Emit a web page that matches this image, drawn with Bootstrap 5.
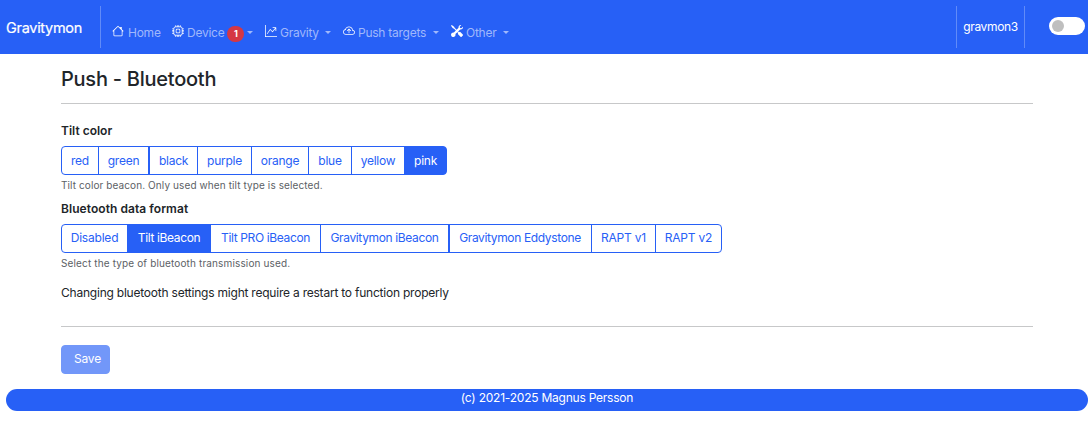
<!DOCTYPE html>
<html lang="en">
<head>
<meta charset="utf-8">
<meta name="viewport" content="width=device-width, initial-scale=1">
<title>Gravitymon</title>
<link href="https://cdn.jsdelivr.net/npm/bootstrap@5.3.0/dist/css/bootstrap.min.css" rel="stylesheet">
<script src="https://cdn.jsdelivr.net/npm/bootstrap@5.3.0/dist/js/bootstrap.bundle.min.js" defer></script>
<style>
:root { --gm-blue: #2760f6; }
body { font-family: Inter, "Liberation Sans", sans-serif; font-size: 12px; line-height: 18px; color: #212529; letter-spacing: -.1px; overflow: hidden; }
.gm-nav { height: 54px; background: var(--gm-blue); padding: 0; }
.gm-nav .navbar-brand { font-size: 14.5px; letter-spacing: -.3px; width: 94px; margin: 2px 0 0 6px; padding: 0; line-height: 22px; -webkit-text-stroke: .2px #fff; }
.gm-rule { width: 1px; height: 42px; background: rgba(255,255,255,.27); }
.gm-menu { padding-top: 11px; }
.gm-nav .gm-menu .nav-link { padding: 0; height: 20px; color: #a0b8fb; display: flex; align-items: center; white-space: nowrap; letter-spacing: -.25px; }
.gm-menu svg { flex: none; width: 12px; height: 12px; margin-right: 3px; margin-bottom: 3px; fill: #fff; }
.gm-menu .dropdown-toggle::after { margin-left: auto; border-width: 3px; border-bottom: 0; vertical-align: 0; }
.gm-nav .gm-count { flex: none; width: 17px; height: 16px; padding: 0; line-height: 16px; font-size: 9px; margin-left: 3px; border-radius: 8px; background: #d53744; position: relative; top: 1px; }
.m-home { width: 60px; margin-left: 11px; }
.m-device { width: 81px; }
.m-gravity { width: 66px; margin-left: 12px; }
.m-push { width: 96px; margin-left: 12px; }
.m-other { width: 58px; margin-left: 12px; }
.gm-host { width: 67px; letter-spacing: -.35px; }
.gm-switch { width: 36px; height: 18px; border-radius: 9px; background: #fff; padding: 3px; margin: 0 3px 2px 24px; }
.gm-switch span { display: block; width: 12px; height: 12px; border-radius: 50%; background: #bfbfbf; }
.gm-page { width: 972px; margin-left: 61px; padding: 12px 0 0; }
.gm-page h1 { font-size: 20px; line-height: 26px; letter-spacing: -.25px; margin: 0 0 11px; }
.gm-page hr { margin: 0; border-color: #212529; opacity: .25; }
.gm-label { display: block; font-weight: 600; line-height: 18px; letter-spacing: .06px; margin: 8px 0 6px; }
hr + .gm-label { margin-top: 18px; letter-spacing: 0; }
.gm-page .btn { --bs-btn-color: var(--gm-blue); --bs-btn-border-color: var(--gm-blue); --bs-btn-active-bg: var(--gm-blue); --bs-btn-active-border-color: var(--gm-blue); --bs-btn-padding-x: 0; --bs-btn-padding-y: 0; --bs-btn-font-size: 12px; --bs-btn-border-radius: 4px; height: 29px; line-height: 27px; flex: none; white-space: nowrap; letter-spacing: -.25px; }
.gm-page .gm-formats .btn { letter-spacing: -.36px; padding-bottom: 2px; line-height: 25px; }
.gm-page .gm-formats .w-r1, .gm-page .gm-formats .w-r2, .gm-page .gm-formats .w-off { letter-spacing: -.2px; }
.gm-page .btn-group > .gm-apart { margin-left: 0 !important; }
.gm-page .gm-formats .w-eddy { padding-right: 1px; }
.gm-help { font-size: 10px; line-height: 14px; margin-top: 3px; color: #5c6165; letter-spacing: .1px; }
.gm-formats + .gm-help { letter-spacing: .14px; }
.gm-note { margin: 14px 0 24px; letter-spacing: -.22px; }
.gm-page .gm-save { --bs-btn-disabled-bg: var(--gm-blue); --bs-btn-disabled-border-color: var(--gm-blue); width: 49px; padding: 0 0 2px 4px; line-height: 25px; margin-top: 18px; }
.gm-foot { height: 22px; margin: 15px 0 0 6px; border-radius: 11px; background: var(--gm-blue); line-height: 18px; letter-spacing: -.23px; }
.w-red{width:38px}.w-green{width:51px}.w-black{width:49px}.w-purple{width:55px}.w-orange{width:58px}.w-blue{width:44px}.w-yellow{width:54px}.w-pink{width:43px}
.w-off{width:67px}.w-tilt{width:84px}.w-pro{width:111px}.w-gib{width:129px}.w-eddy{width:143px}.w-r1{width:65px}.w-r2{width:67px}
</style>
</head>
<body>
<nav class="navbar navbar-expand gm-nav" data-bs-theme="dark">
  <div class="d-flex align-items-center w-100 h-100">
    <a class="navbar-brand text-white" href="#">Gravitymon</a>
    <div class="gm-rule"></div>
    <ul class="navbar-nav gm-menu">
      <li class="nav-item m-home"><a class="nav-link" href="#"><svg class="me-1" viewBox="0 0 16 16"><path d="M8.700 1.500a1 1 0 0 0-1.400 0L.6 8.100l.8.8.6-.6v5.200A1.500 1.500 0 0 0 3.500 15h9a1.500 1.500 0 0 0 1.500-1.500V8.300l.6.6.8-.8L13 5.800V2.500h-2v1.300zM3 7.300l5-5 5 5v6.200a.5.5 0 0 1-.5.5h-9a.5.5 0 0 1-.5-.5z"/></svg><span>Home</span></a></li>
      <li class="nav-item m-device"><a class="nav-link dropdown-toggle" href="#"><svg viewBox="0 0 16 16"><path d="M5 0a.5.5 0 0 1 .5.5V2h1V.5a.5.5 0 0 1 1 0V2h1V.5a.5.5 0 0 1 1 0V2h1V.5a.5.5 0 0 1 1 0V2A2.500 2.500 0 0 1 14 4.500h1.500a.5.5 0 0 1 0 1H14v1h1.500a.5.5 0 0 1 0 1H14v1h1.500a.5.5 0 0 1 0 1H14v1h1.500a.5.5 0 0 1 0 1H14a2.500 2.500 0 0 1-2.500 2.500v1.500a.5.5 0 0 1-1 0V14h-1v1.500a.5.5 0 0 1-1 0V14h-1v1.500a.5.5 0 0 1-1 0V14h-1v1.500a.5.5 0 0 1-1 0V14A2.500 2.500 0 0 1 2 11.500H.5a.5.5 0 0 1 0-1H2v-1H.5a.5.5 0 0 1 0-1H2v-1H.5a.5.5 0 0 1 0-1H2v-1H.5a.5.5 0 0 1 0-1H2A2.500 2.500 0 0 1 4.500 2V.5A.5.5 0 0 1 5 0m-.5 3A1.500 1.500 0 0 0 3 4.500v7A1.500 1.500 0 0 0 4.500 13h7a1.500 1.500 0 0 0 1.500-1.500v-7A1.500 1.500 0 0 0 11.500 3zM5 6.500A1.500 1.500 0 0 1 6.500 5h3A1.500 1.500 0 0 1 11 6.500v3A1.500 1.500 0 0 1 9.500 11h-3A1.500 1.500 0 0 1 5 9.500zM6.500 6a.5.5 0 0 0-.5.5v3a.5.5 0 0 0 .5.5h3a.5.5 0 0 0 .5-.5v-3a.5.5 0 0 0-.5-.5z"/></svg><span>Device</span><span class="badge gm-count">1</span></a></li>
      <li class="nav-item m-gravity"><a class="nav-link dropdown-toggle" href="#"><svg viewBox="0 0 16 16"><path fill-rule="evenodd" d="M0 0h1v15h15v1H0zm10 3.500a.5.5 0 0 1 .5-.5h4a.5.5 0 0 1 .5.5v4a.5.5 0 0 1-1 0V4.900l-3.613 4.417a.5.5 0 0 1-.74.037L7.060 6.767l-3.656 5.027a.5.5 0 0 1-.808-.588l4-5.500a.5.5 0 0 1 .758-.06l2.609 2.610L13.445 4H10.500a.5.5 0 0 1-.5-.5"/></svg><span>Gravity</span></a></li>
      <li class="nav-item m-push"><a class="nav-link dropdown-toggle" href="#"><svg viewBox="0 0 16 16"><path d="M7.646 5.146a.5.5 0 0 1 .708 0l2 2a.5.5 0 0 1-.708.708L8.500 6.707V10.500a.5.5 0 0 1-1 0V6.707L6.354 7.854a.5.5 0 1 1-.708-.708z"/><path d="M4.406 3.342A5.530 5.530 0 0 1 8 2c2.690 0 4.923 2 5.166 4.579C14.758 6.804 16 8.137 16 9.773 16 11.569 14.502 13 12.687 13H3.781C1.708 13 0 11.366 0 9.318c0-1.763 1.266-3.223 2.942-3.593.143-.863.698-1.723 1.464-2.383m.653.757c-.757.653-1.153 1.440-1.153 2.056v.448l-.445.049C2.064 6.805 1 7.952 1 9.318 1 10.785 2.230 12 3.781 12h8.906C13.980 12 15 10.988 15 9.773c0-1.216-1.020-2.228-2.313-2.228h-.5v-.5C12.188 4.825 10.328 3 8 3a4.530 4.530 0 0 0-2.941 1.100z"/></svg><span>Push targets</span></a></li>
      <li class="nav-item m-other"><a class="nav-link dropdown-toggle" href="#"><svg viewBox="0 0 16 16"><path d="M1 0 0 1l2.200 3.081a1 1 0 0 0 .815.419h.07a1 1 0 0 1 .708.293l2.675 2.675-2.617 2.654A3.003 3.003 0 0 0 0 13a3 3 0 1 0 5.878-.851l2.654-2.617.968.968-.305.914a1 1 0 0 0 .242 1.023l3.270 3.270a.997.997 0 0 0 1.414 0l1.586-1.586a.997.997 0 0 0 0-1.414l-3.270-3.270a1 1 0 0 0-1.023-.242L10.500 9.500l-.96-.96 2.680-2.643A3.005 3.005 0 0 0 16 3q0-.405-.102-.777l-2.140 2.141L12 4l-.364-1.757L13.777.102a3 3 0 0 0-3.675 3.680L7.462 6.460 4.793 3.793a1 1 0 0 1-.293-.707v-.071a1 1 0 0 0-.419-.814z"/></svg><span>Other</span></a></li>
    </ul>
    <div class="gm-rule ms-auto"></div>
    <div class="gm-host text-white text-center">gravmon3</div>
    <div class="gm-rule"></div>
    <div class="gm-switch"><span></span></div>
  </div>
</nav>
<main class="gm-page">
  <h1>Push - Bluetooth</h1>
  <hr>
  <label class="gm-label">Tilt color</label>
  <div class="btn-group d-flex">
    <button class="btn btn-outline-primary w-red">red</button><button class="btn btn-outline-primary w-green">green</button><button class="btn btn-outline-primary w-black gm-apart">black</button><button class="btn btn-outline-primary w-purple">purple</button><button class="btn btn-outline-primary w-orange">orange</button><button class="btn btn-outline-primary w-blue">blue</button><button class="btn btn-outline-primary w-yellow">yellow</button><button class="btn btn-outline-primary active w-pink">pink</button>
  </div>
  <div class="gm-help">Tilt color beacon. Only used when tilt type is selected.</div>
  <label class="gm-label">Bluetooth data format</label>
  <div class="btn-group d-flex gm-formats">
    <button class="btn btn-outline-primary w-off">Disabled</button><button class="btn btn-outline-primary active w-tilt">Tilt iBeacon</button><button class="btn btn-outline-primary w-pro">Tilt PRO iBeacon</button><button class="btn btn-outline-primary w-gib">Gravitymon iBeacon</button><button class="btn btn-outline-primary w-eddy gm-apart">Gravitymon Eddystone</button><button class="btn btn-outline-primary w-r1">RAPT v1</button><button class="btn btn-outline-primary w-r2">RAPT v2</button>
  </div>
  <div class="gm-help">Select the type of bluetooth transmission used.</div>
  <p class="gm-note">Changing bluetooth settings might require a restart to function properly</p>
  <hr>
  <button class="btn btn-primary gm-save text-white" disabled>Save</button>
</main>
<footer class="gm-foot text-white text-center">(c) 2021-2025 Magnus Persson</footer>
</body>
</html>
